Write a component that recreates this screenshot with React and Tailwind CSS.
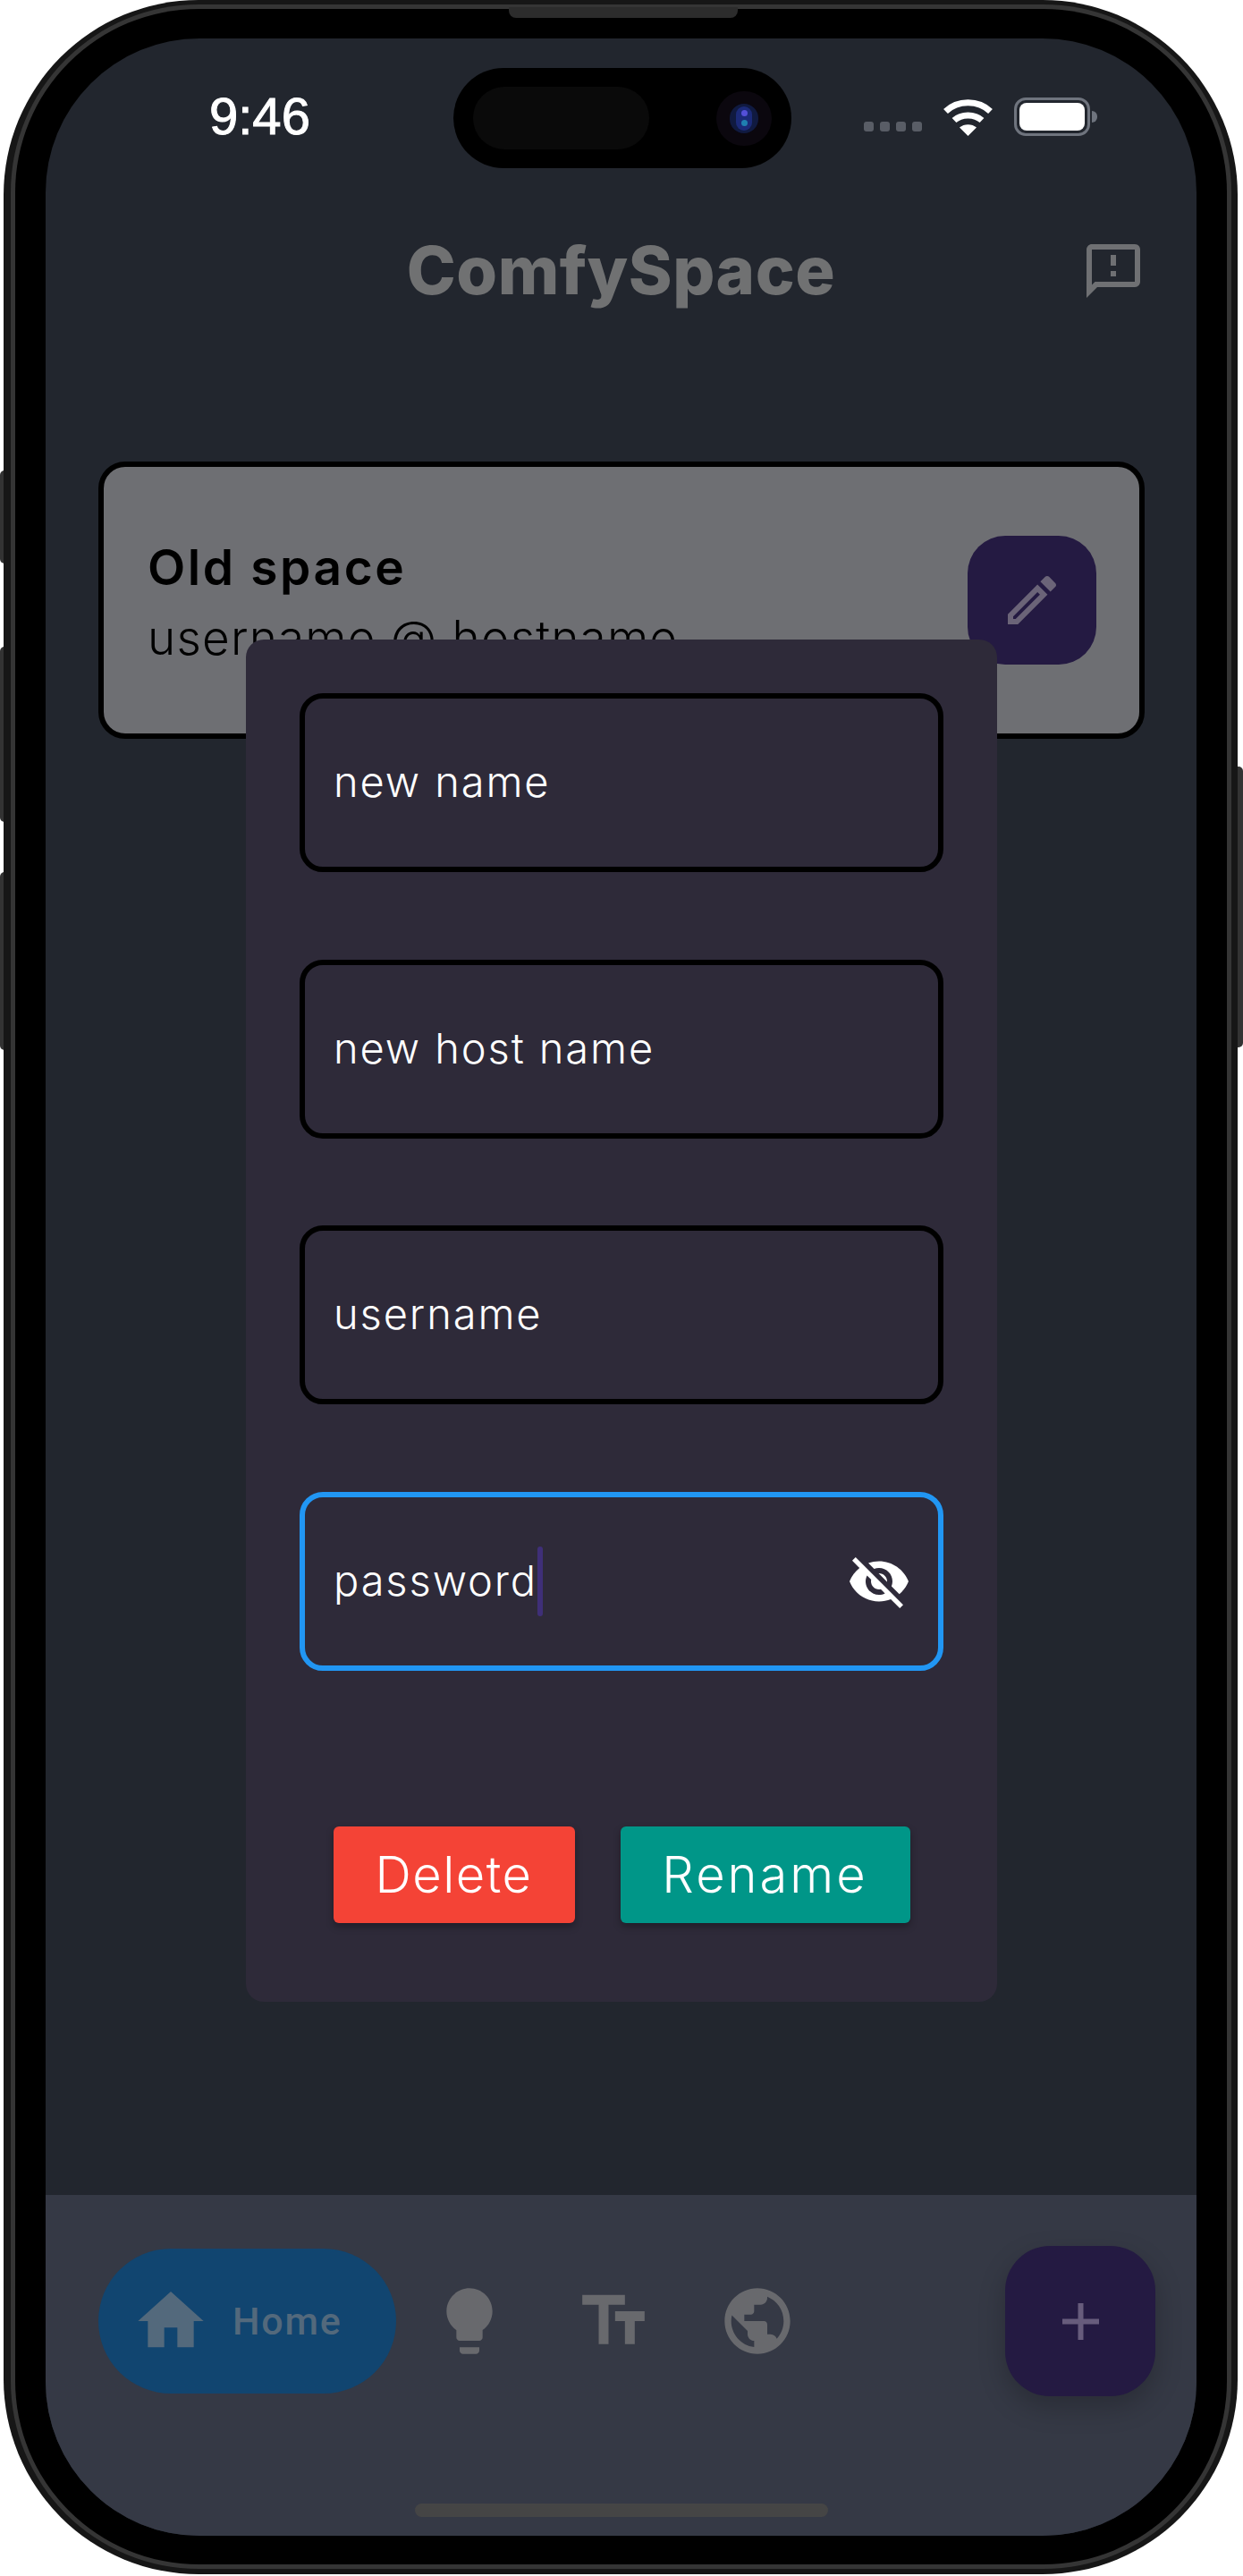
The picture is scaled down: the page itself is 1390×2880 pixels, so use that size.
const sans = 'font-["Inter","Liberation_Sans",sans-serif]'

function MaterialIcon({ d, className }) {
  return (
    <svg viewBox="0 0 24 24" fill="currentColor" className={className}>
      <path d={d} />
    </svg>
  )
}

const icons = {
  feedback:
    'M20 2H4c-1.1 0-1.99.9-1.99 2L2 22l4-4h14c1.1 0 2-.9 2-2V4c0-1.1-.9-2-2-2zm0 14H5.17L4 17.17V4h16v12zm-9-4h2v2h-2zm0-6h2v4h-2z',
  edit:
    'M14.06 9.02l.92.92L5.92 19H5v-.92l9.06-9.06M17.66 3c-.25 0-.51.1-.7.29l-1.83 1.83 3.75 3.75 1.83-1.83c.39-.39.39-1.02 0-1.41l-2.34-2.34c-.2-.2-.45-.29-.71-.29zm-3.6 3.19L3 17.25V21h3.75L17.81 9.94l-3.75-3.75z',
  eyeOff:
    'M12 7c2.76 0 5 2.24 5 5 0 .65-.13 1.26-.36 1.83l2.92 2.92c1.51-1.26 2.7-2.89 3.43-4.75-1.73-4.39-6-7.5-11-7.5-1.4 0-2.74.25-3.98.7l2.16 2.16C10.74 7.13 11.35 7 12 7zM2 4.27l2.28 2.28.46.46C3.08 8.3 1.78 10.02 1 12c1.73 4.39 6 7.5 11 7.5 1.55 0 3.03-.3 4.38-.84l.42.42L19.73 22 21 20.73 3.27 3 2 4.27zM7.53 9.8l1.55 1.55c-.05.21-.08.43-.08.65 0 1.66 1.34 3 3 3 .22 0 .44-.03.65-.08l1.55 1.55c-.67.33-1.41.53-2.2.53-2.76 0-5-2.24-5-5 0-.79.2-1.53.53-2.2zm4.31-.78l3.15 3.15.02-.16c0-1.66-1.34-3-3-3l-.17.01z',
  home: 'M10 20v-6h4v6h5v-8h3L12 3 2 12h3v8z',
  bulb:
    'M9 21c0 .55.45 1 1 1h4c.55 0 1-.45 1-1v-1H9v1zm3-19C8.14 2 5 5.14 5 9c0 2.38 1.19 4.47 3 5.74V17c0 .55.45 1 1 1h6c.55 0 1-.45 1-1v-2.26c1.81-1.27 3-3.36 3-5.74 0-3.86-3.14-7-7-7z',
  text: 'M2.5 4v3h5v12h3V7h5V4h-13zm19 5h-9v3h3v7h3v-7h3V9z',
  globe:
    'M12 2C6.48 2 2 6.48 2 12s4.48 10 10 10 10-4.48 10-10S17.52 2 12 2zm-1 17.93c-3.95-.49-7-3.85-7-7.93 0-.62.08-1.21.21-1.79L9 15v1c0 1.1.9 2 2 2v1.93zm6.9-2.54c-.26-.81-1-1.39-1.9-1.39h-1v-3c0-.55-.45-1-1-1H8v-2h2c.55 0 1-.45 1-1V7h2c1.1 0 2-.9 2-2v-.41c2.93 1.19 5 4.06 5 7.41 0 2.08-.8 3.97-2.1 5.39z',
}

function StatusBar() {
  return (
    <div className="flex h-[174px] items-center pl-[183px] pr-[111px]">
      <span className='font-["Liberation_Sans",sans-serif] text-[58px] leading-none text-white [-webkit-text-stroke:1px_white]'>9:46</span>
      <div className="ml-auto flex items-center">
        <div className="mt-[22px] flex gap-[7px]">
          {[0, 1, 2, 3].map((i) => (
            <span key={i} className="h-[11px] w-[11px] rounded-[3px] bg-[#595d66]" />
          ))}
        </div>
        <svg viewBox="0 0 57 43" className="ml-[23px] h-[43px] w-[57px]" fill="none" stroke="#fff" strokeWidth="7">
          <path d="M3.5 15.5C17 2.5 40 2.5 53.5 15.5" />
          <path d="M13 25.5C21 18 36 18 44 25.5" />
          <path d="M19 33.5C24 29 33 29 38 33.5L28.5 43Z" fill="#fff" stroke="none" />
        </svg>
        <div className="ml-[23px] flex items-center">
          <div className="h-[43px] w-[85px] rounded-[13px] border-[3px] border-[#6f747e] p-[3px]">
            <div className="h-full w-full rounded-[8px] bg-white" />
          </div>
          <div className="ml-[2px] h-[13px] w-[6px] rounded-r-full bg-[#6f747e]" />
        </div>
      </div>
    </div>
  )
}

function Island() {
  return (
    <div className="absolute top-[33px] left-[456px] flex h-[112px] w-[378px] items-center rounded-full bg-black pl-[22px]">
      <div className="h-[70px] w-[197px] rounded-full bg-[#0a0a0a]" />
      <div className="ml-[75px] flex h-[61px] w-[62px] items-center justify-center rounded-full bg-[#0b070e]">
        <div className="flex h-[33px] w-[32px] items-center justify-center rounded-full bg-[#101a40]">
          <div className="flex h-[27px] w-[18px] flex-col items-center justify-center gap-[4px] rounded-full bg-[#1b2a78]">
            <span className="h-[7px] w-[7px] rounded-full bg-[#5450d8]" />
            <span className="h-[7px] w-[7px] rounded-full bg-[#1f7fb0]" />
          </div>
        </div>
      </div>
    </div>
  )
}

function SpaceCard() {
  return (
    <div className="mt-[127px] mr-[58px] ml-[59px] flex h-[310px] items-center justify-between rounded-[30px] border-[6px] border-black bg-[#6e6f73] pr-[48px] pl-[49px]">
      <div className={`${sans} text-black`}>
        <div className="text-[55px] leading-[70px] font-semibold tracking-[2.6px]">Old space</div>
        <div className="mt-[13px] text-[53px] leading-[62px] font-light tracking-[1.2px]">username @ hostname</div>
      </div>
      <div className="flex h-[144px] w-[144px] items-center justify-center rounded-[42px] bg-[#241a42] text-[#6b6478]">
        <MaterialIcon d={icons.edit} className="h-[72px] w-[72px]" />
      </div>
    </div>
  )
}

function Field({ label, focused }) {
  return (
    <div
      className={`flex h-[200px] items-center rounded-[26px] border-[6px] pr-[30px] pl-[32px] ${focused ? 'border-[#2196f3]' : 'border-black'}`}
    >
      <span className={`${sans} pb-[3px] text-[47px] leading-none font-light tracking-[1.9px] text-white`}>{label}</span>
      {focused ? (
        <>
          <span className="h-[78px] w-[6px] rounded-full bg-[#3f2f78]" />
          <MaterialIcon d={icons.eyeOff} className="ml-auto h-[72px] w-[72px] text-white" />
        </>
      ) : null}
    </div>
  )
}

function EditDialog() {
  return (
    <div className="absolute top-[672px] left-[224px] flex h-[1523px] w-[840px] flex-col rounded-[20px] bg-[#2e2a39] px-[60px] pt-[60px]">
      <div className="flex flex-col gap-[97.5px]">
        <Field label="new name" />
        <Field label="new host name" />
        <Field label="username" />
        <Field label="password" focused />
      </div>
      <div className={`${sans} mt-[174px] flex justify-center gap-[51px] text-[56px] leading-none font-light text-white`}>
        <button type="button" className="h-[108px] w-[270px] rounded-[6px] bg-[#f44336] tracking-[1.5px] shadow-[0_4px_8px_rgba(0,0,0,0.3)]">
          Delete
        </button>
        <button type="button" className="h-[108px] w-[324px] rounded-[6px] bg-[#009688] tracking-[3px] shadow-[0_4px_8px_rgba(0,0,0,0.3)]">
          Rename
        </button>
      </div>
    </div>
  )
}

function BottomBar() {
  return (
    <div className="mt-auto flex h-[381px] flex-col bg-[#353945] pt-[57px]">
      <div className="flex h-[168px] items-center pr-[46px] pl-[59px] text-[#68696d]">
        <div className="flex h-[162px] w-[333px] items-center rounded-full bg-[#114570] pl-[37px] text-[#53697c]">
          <MaterialIcon d={icons.home} className="h-[88px] w-[88px]" />
          <span className='ml-[25px] font-["Roboto",sans-serif] text-[43px] leading-none font-medium tracking-[1.8px]'>Home</span>
        </div>
        <div className="ml-[38px] flex gap-[73px]">
          <MaterialIcon d={icons.bulb} className="h-[88px] w-[88px]" />
          <MaterialIcon d={icons.text} className="h-[88px] w-[88px]" />
          <MaterialIcon d={icons.globe} className="h-[88px] w-[88px]" />
        </div>
        <div className="ml-auto flex h-[168px] w-[168px] items-center justify-center rounded-[50px] bg-[#241a42] shadow-[0_12px_30px_rgba(0,0,0,0.22)]">
          <svg viewBox="0 0 41 41" className="h-[41px] w-[41px]" fill="#675c7c">
            <rect x="17.5" width="6" height="41" />
            <rect y="17.5" width="41" height="6" />
          </svg>
        </div>
      </div>
      <div className="mx-auto mt-[120px] h-[15px] w-[462px] rounded-full bg-[#454545]" />
    </div>
  )
}

function SideButton({ className }) {
  return <div className={`absolute w-[8px] bg-[#333333] ${className}`} />
}

export default function App() {
  return (
    <div className="relative h-[2880px] w-[1390px] overflow-hidden bg-white pr-[6px] pb-[2px] pl-[4px]">
      <SideButton className="top-[526px] left-0 h-[104px] rounded-l-[5px]" />
      <SideButton className="top-[723px] left-0 h-[196px] rounded-l-[5px]" />
      <SideButton className="top-[975px] left-0 h-[199px] rounded-l-[5px]" />
      <SideButton className="top-[857px] right-0 h-[314px] rounded-r-[5px]" />

      <div className="relative h-full rounded-[218px] bg-[#161616] pt-[5px] pr-[7px] pb-[6px] pl-[8px]">
        <div className="absolute top-[8px] left-[565px] h-[12px] w-[256px] rounded-b-[8px] bg-[#2c2c2c]" />
        <div className="h-full rounded-[210px] bg-[#353535] p-[5px]">
          <div className="h-full rounded-[205px] bg-black px-[34px] pt-[33px] pb-[32px]">
            <div className="relative flex h-full flex-col overflow-hidden rounded-[172px] bg-[#22262e]">
              <Island />
              <StatusBar />
              <header className="relative flex h-[172px] items-center justify-center">
                <h1 className={`${sans} pb-[2px] text-[74px] leading-none font-extrabold tracking-[0.5px] text-[#707172]`}>ComfySpace</h1>
                <MaterialIcon d={icons.feedback} className="absolute top-[50px] right-[57px] h-[72px] w-[72px] text-[#6f7073]" />
              </header>
              <SpaceCard />
              <EditDialog />
              <BottomBar />
            </div>
          </div>
        </div>
      </div>
    </div>
  )
}
